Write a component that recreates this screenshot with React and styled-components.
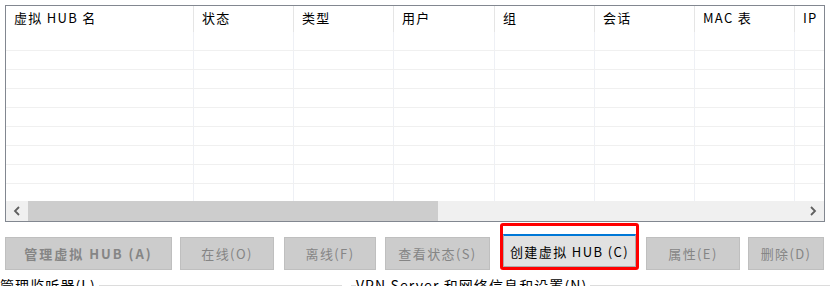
import React from 'react';
import styled, { createGlobalStyle } from 'styled-components';

const GlobalStyle = createGlobalStyle`
  html, body {
    margin: 0;
    padding: 0;
    background: #ffffff;
    font-family: 'Noto Sans CJK SC', 'Noto Sans', sans-serif;
    overflow: hidden;
  }
`;

const columns = [
  { title: '虚拟 HUB 名', width: 188 },
  { title: '状态', width: 100 },
  { title: '类型', width: 100 },
  { title: '用户', width: 101 },
  { title: '组', width: 100 },
  { title: '会话', width: 100 },
  { title: 'MAC 表', width: 100 },
  { title: 'IP', width: 40 },
];

const buttons = [
  { label: '管理虚拟 HUB (A)', width: 167, ml: 5, bold: true },
  { label: '在线(O)', width: 94, ml: 8 },
  { label: '离线(F)', width: 92, ml: 10 },
  { label: '查看状态(S)', width: 105, ml: 9 },
  { label: '创建虚拟 HUB (C)', width: 133, ml: 13, active: true },
  { label: '属性(E)', width: 94, ml: 7 },
  { label: '删除(D)', width: 76, ml: 8 },
];

const Page = styled.div`
  width: 832px;
  height: 286px;
  overflow: hidden;
  display: flex;
  flex-direction: column;
  & > * {
    flex-shrink: 0;
  }
`;

const ListBox = styled.div`
  margin: 5px 0 0 5px;
  width: 818px;
  height: 215px;
  border: 1px solid #828790;
  display: flex;
  flex-direction: column;
  overflow: hidden;
  background: #fff;
`;

const Grid = styled.div`
  flex: 1;
  overflow: hidden;
`;

const HeaderRow = styled.div`
  display: flex;
  height: 26px;
`;

const HeaderCell = styled.div`
  flex: 0 0 ${({ $w }) => $w}px;
  box-sizing: border-box;
  padding: 3px 0 0 8px;
  font-size: 13px;
  line-height: 18px;
  letter-spacing: 1.3px;
  color: #000;
  white-space: nowrap;
  border-right: 1px solid #e5e5e5;
  &:last-child {
    border-right: none;
  }
`;

const Row = styled.div`
  display: flex;
  height: 19px;
  border-bottom: 1px solid #f0f0f0;
  box-sizing: border-box;
`;

const Cell = styled.div`
  flex: 0 0 ${({ $w }) => $w}px;
  box-sizing: border-box;
  border-right: 1px solid #eef0f5;
  &:last-child {
    border-right: none;
  }
`;

const ScrollBar = styled.div`
  height: 20px;
  display: flex;
  background: #f0f0f0;
  flex-shrink: 0;
`;

const Arrow = styled.div`
  width: 22px;
  display: flex;
  align-items: center;
  justify-content: center;
`;

const Thumb = styled.div`
  width: 410px;
  background: #cdcdcd;
`;

const Track = styled.div`
  flex: 1;
`;

const ButtonRow = styled.div`
  display: flex;
  align-items: flex-end;
  margin-top: 1px;
  height: 47px;
`;

const Highlight = styled.div`
  margin-left: ${({ $ml }) => $ml}px;
  border: 3px solid #ff0000;
  border-radius: 3px;
  padding-top: 8px;
  background: #fff;
  display: flex;
`;

const Button = styled.div`
  margin-left: ${({ $ml }) => $ml}px;
  width: ${({ $w }) => $w}px;
  height: 33px;
  box-sizing: border-box;
  display: flex;
  align-items: center;
  justify-content: center;
  background: ${({ $active }) => ($active ? '#e1e1e1' : '#cccccc')};
  border: 1px solid ${({ $active }) => ($active ? '#adadad' : '#bfbfbf')};
  border-top: ${({ $active }) => ($active ? '2px solid #0078d7' : '1px solid #bfbfbf')};
  color: ${({ $active }) => ($active ? '#000' : '#858585')};
  font-size: 13px;
  font-weight: ${({ $bold }) => ($bold ? 700 : 400)};
  white-space: nowrap;
  letter-spacing: ${({ $bold }) => ($bold ? '2px' : '1.4px')};
`;

const GroupRow = styled.div`
  display: flex;
  align-items: center;
  margin-top: 5px;
  height: 20px;
`;

const GroupLabel = styled.span`
  font-size: 14px;
  line-height: 20px;
  color: #000;
  white-space: nowrap;
  letter-spacing: 1.1px;
`;

const GroupLine = styled.div`
  width: ${({ $w }) => $w}px;
  margin-left: ${({ $ml }) => $ml || 0}px;
  border-top: 1px solid #dcdcdc;
`;

const Chevron = ({ dir }) => (
  <svg width="8" height="10" viewBox="0 0 8 10">
    <path
      d={dir === 'left' ? 'M6 1 L2 5 L6 9' : 'M2 1 L6 5 L2 9'}
      fill="none"
      stroke="#606060"
      strokeWidth="1.8"
    />
  </svg>
);

export default function App() {
  const rows = Array.from({ length: 9 });
  return (
    <>
      <GlobalStyle />
      <Page>
        <ListBox>
          <Grid>
            <HeaderRow>
              {columns.map((c) => (
                <HeaderCell key={c.title} $w={c.width}>
                  {c.title}
                </HeaderCell>
              ))}
            </HeaderRow>
            {rows.map((_, i) => (
              <Row key={i}>
                {columns.map((c) => (
                  <Cell key={c.title} $w={c.width} />
                ))}
              </Row>
            ))}
          </Grid>
          <ScrollBar>
            <Arrow>
              <Chevron dir="left" />
            </Arrow>
            <Thumb />
            <Track />
            <Arrow>
              <Chevron dir="right" />
            </Arrow>
          </ScrollBar>
        </ListBox>
        <ButtonRow>
          {buttons.map((b) =>
            b.active ? (
              <Highlight key={b.label} $ml={b.ml - 3}>
                <Button $w={b.width} $ml={0} $active>
                  {b.label}
                </Button>
              </Highlight>
            ) : (
              <Button key={b.label} $w={b.width} $ml={b.ml} $bold={b.bold}>
                {b.label}
              </Button>
            )
          )}
        </ButtonRow>
        <GroupRow>
          <GroupLabel>管理监听器(L)</GroupLabel>
          <GroupLine $w={243} $ml={3} />
          <GroupLine $w={5} $ml={9} />
          <GroupLabel>VPN Server 和网络信息和设置(N)</GroupLabel>
          <GroupLine $w={240} $ml={3} />
        </GroupRow>
      </Page>
    </>
  );
}
